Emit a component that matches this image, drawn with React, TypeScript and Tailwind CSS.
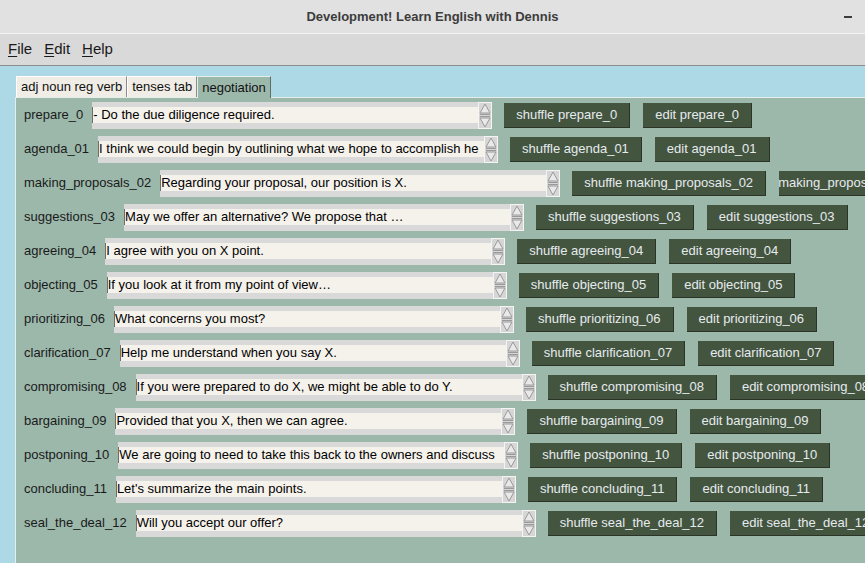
import React from 'react';

const rows = [
  { name: 'prepare_0', text: '- Do the due diligence required.' },
  { name: 'agenda_01', text: 'I think we could begin by outlining what we hope to accomplish he' },
  { name: 'making_proposals_02', text: 'Regarding your proposal, our position is X.' },
  { name: 'suggestions_03', text: 'May we offer an alternative? We propose that …' },
  { name: 'agreeing_04', text: 'I agree with you on X point.' },
  { name: 'objecting_05', text: 'If you look at it from my point of view…' },
  { name: 'prioritizing_06', text: 'What concerns you most?' },
  { name: 'clarification_07', text: 'Help me understand when you say X.' },
  { name: 'compromising_08', text: 'If you were prepared to do X, we might be able to do Y.' },
  { name: 'bargaining_09', text: 'Provided that you X, then we can agree.' },
  { name: 'postponing_10', text: 'We are going to need to take this back to the owners and discuss' },
  { name: 'concluding_11', text: "Let's summarize the main points." },
  { name: 'seal_the_deal_12', text: 'Will you accept our offer?' },
];

const Spin = () => (
  <svg width="14" height="27" viewBox="0 0 14 27" className="shrink-0">
    <rect x="0.5" y="0.5" width="13" height="26" fill="#d6d6d6" stroke="#f4f4f4" />
    <path d="M7 2 L12 11 L2 11 Z" fill="#e9e9e9" stroke="#9a9a9a" />
    <path d="M2 12.5 H12 M2 14.5 H12" stroke="#9a9a9a" />
    <path d="M2 16 L12 16 L7 25 Z" fill="#e9e9e9" stroke="#9a9a9a" />
  </svg>
);

const btn =
  'flex h-[25px] shrink-0 items-center justify-center overflow-hidden whitespace-nowrap border-b border-r border-[#2b3427] bg-[#44553f] px-3 text-[#e6ebef]';

const Row = ({ name, text }: { name: string; text: string }) => (
  <div className="flex h-[34px] shrink-0 items-center">
    <span className="ml-[8px] mr-[9px] shrink-0 whitespace-nowrap text-[#1a1a1a]">{name}</span>
    <div className="flex h-[27px] w-[386px] shrink-0 flex-col bg-[#d9d9d9] pt-[5px]">
      <div className="h-[16px] overflow-hidden whitespace-nowrap border-l border-[#6e6e6e] bg-[#f5f2ec] leading-[15px] text-black">
        {text}
      </div>
    </div>
    <Spin />
    <div className={`ml-[12px] ${btn}`}>shuffle {name}</div>
    {name === 'making_proposals_02' ? (
      <div className={`ml-[13px] w-[102px] ${btn}`}>edit {name}</div>
    ) : (
      <div className={`ml-[13px] ${btn}`}>edit {name}</div>
    )}
  </div>
);

const MenuItem = ({ label }: { label: string }) => (
  <span className="px-[6px]">
    <span className="underline underline-offset-2">{label[0]}</span>
    {label.slice(1)}
  </span>
);

export default function App() {
  return (
    <div className="flex h-[563px] w-[865px] flex-col overflow-hidden font-['Liberation_Sans',Arial,sans-serif] text-[13px]">
      {/* title bar */}
      <div className="grid h-[34px] shrink-0 grid-cols-[1fr_auto_1fr] items-center border-b border-[#f4f4f4] bg-[#e1e1e1]">
        <div />
        <div className="text-[13px] font-bold text-[#3c3c3c]">Development! Learn English with Dennis</div>
        <div className="flex justify-end pr-[13px]">
          <div className="h-[2px] w-[8px] bg-[#3c3c3c]" />
        </div>
      </div>

      {/* menu */}
      <div className="flex h-[32px] shrink-0 items-center border-b border-[#8c8c8c] bg-[#d9d9d9] pl-[2px] text-[15px] text-[#1a1a1a]">
        <MenuItem label="File" />
        <MenuItem label="Edit" />
        <MenuItem label="Help" />
      </div>

      <div className="flex min-h-0 flex-1 flex-col bg-[#add8e6] pl-[15px] pt-[10px]">
        {/* tabs */}
        <div className="flex h-[21px] shrink-0 items-stretch pl-px">
          <div className="flex items-center border-l border-t border-r border-l-white border-t-white border-r-[#8a8a8a] bg-[#f0ede6] px-[4px] text-[#111]">adj noun reg verb</div>
          <div className="flex items-center border-l border-t border-r border-l-white border-t-white border-r-[#8a8a8a] bg-[#f0ede6] px-[4px] text-[#111]">tenses tab</div>
          <div className="relative z-10 -mb-px flex items-center border-l border-t border-r border-l-[#e4efe9] border-t-[#e4efe9] border-r-[#5f6f67] bg-[#9cb8ab] px-[4px] text-[#111]">negotiation</div>
        </div>

        {/* panel */}
        <div className="flex min-h-0 flex-1 flex-col overflow-hidden border-l border-t border-[#e4efe9] bg-[#9cb8ab]">
          {rows.map(r => (
            <Row key={r.name} name={r.name} text={r.text} />
          ))}
        </div>
      </div>
    </div>
  );
}
